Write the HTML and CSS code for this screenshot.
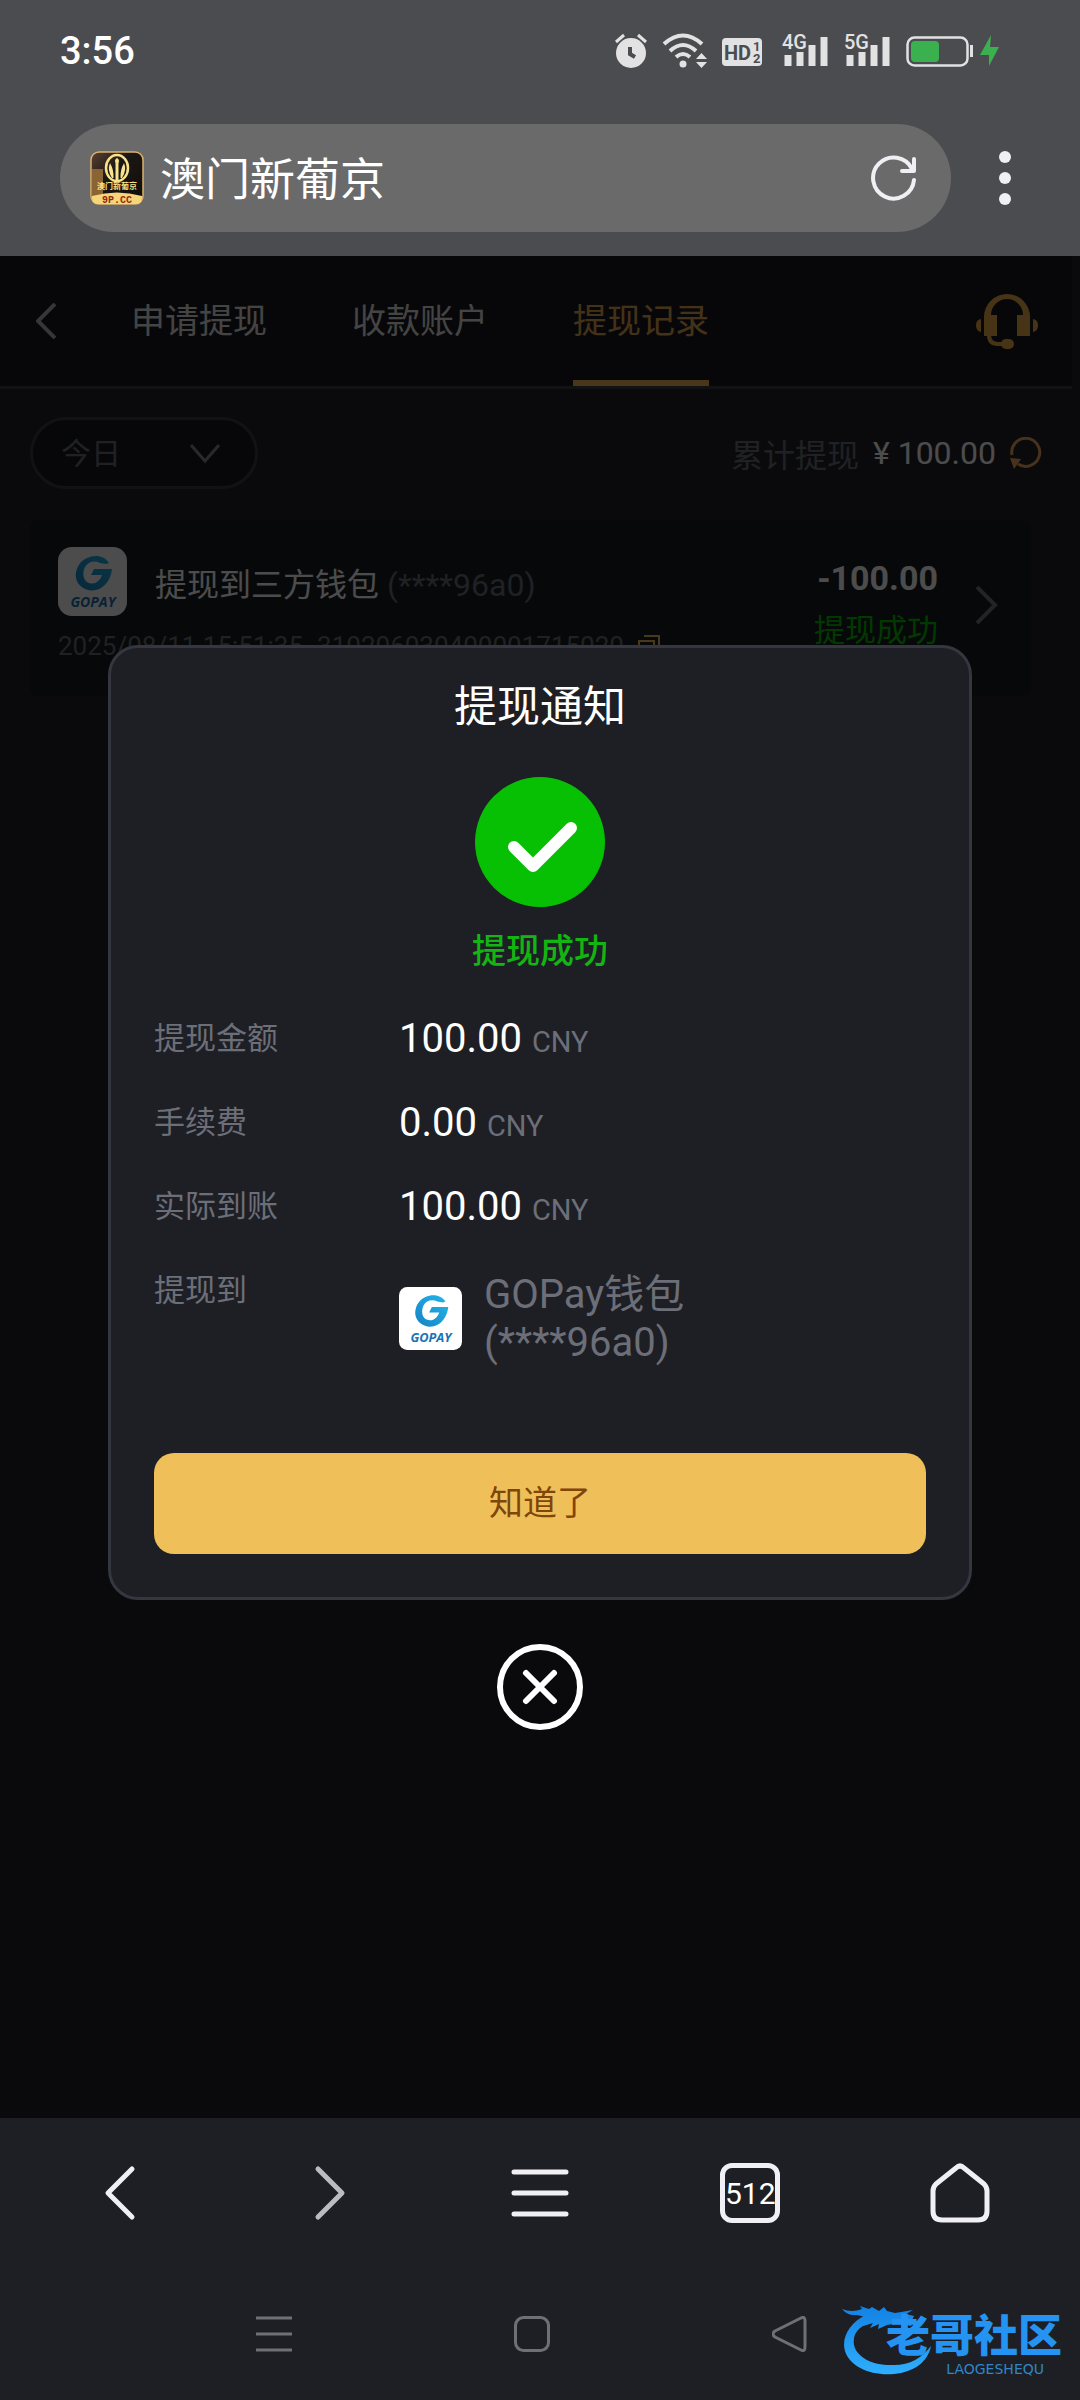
FILE: index.html
```html
<!DOCTYPE html>
<html lang="zh-CN">
<head>
    <meta charset="UTF-8">
    <meta name="viewport" content="width=device-width, initial-scale=1.0">
    <title>提现记录</title>
    <link rel="stylesheet" href="styles.css">
</head>
<body>
    <header class="browser-top">
        <div class="status-bar">
            <span class="clock">3:56</span>
            <div class="status-icons">
                <svg width="32" height="36" viewBox="0 0 32 36">
                    <circle cx="16" cy="20" r="15" fill="#e2e2e3"/>
                    <path d="M1 9L9 2M23 2L31 9" stroke="#e2e2e3" stroke-width="3"/>
                    <path d="M15 14V21L20 24" stroke="#4b4c50" stroke-width="4" fill="none"/>
                </svg>
                <svg width="43" height="36" viewBox="0 0 43 36">
                    <path d="M1 11Q20-6 39 11M7 18Q20 6 33 18M13 24Q20 18 27 24" stroke="#e2e2e3" stroke-width="4" fill="none"/>
                    <circle cx="20" cy="31" r="3.500" fill="#e2e2e3"/>
                    <path d="M33 26L38.500 20L44 26ZM33 29L38.500 35L44 29Z" fill="#e2e2e3"/>
                </svg>
                <svg width="44" height="36" viewBox="0 0 44 36">
                    <rect y="5" width="40" height="28" rx="4" fill="#e2e2e3"/>
                    <text x="2" y="27" class="hd-text">HD</text>
                    <text x="31" y="18" class="hd-small">1</text>
                    <text x="31" y="30" class="hd-small">2</text>
                </svg>
                <svg width="46" height="36" viewBox="0 0 46 36">
                    <path d="M6 22V33M18 19V33M30 12V33M42 4V33" stroke="#e2e2e3" stroke-width="7"/>
                    <text x="0" y="16" class="net-text">4G</text>
                </svg>
                <svg width="46" height="36" viewBox="0 0 46 36">
                    <path d="M6 22V33M18 19V33M30 12V33M42 4V33" stroke="#e2e2e3" stroke-width="7"/>
                    <text x="0" y="16" class="net-text">5G</text>
                </svg>
                <svg width="94" height="36" viewBox="0 0 94 36">
                    <rect x="1.500" y="4.500" width="60" height="28" rx="7" fill="none" stroke="#e2e2e3" stroke-width="2.500"/>
                    <rect x="5" y="8" width="28" height="21" rx="4" fill="#3bb04f"/>
                    <rect x="64" y="12" width="3" height="12" fill="#e2e2e3"/>
                    <path d="M85 2L74 22H83V33L93 14H84Z" fill="#3bb04f"/>
                </svg>
            </div>
        </div>
        <div class="address-row">
            <div class="address-bar">
                <svg width="54" height="54" viewBox="0 0 54 54">
                    <defs>
                        <linearGradient id="night" x1="0" y1="0" x2="1" y2="1">
                            <stop offset="0" stop-color="#5a4234"/>
                            <stop offset="0.4" stop-color="#1b1714"/>
                            <stop offset="1" stop-color="#0e0c0a"/>
                        </linearGradient>
                    </defs>
                    <rect x="1" y="1" width="52" height="52" rx="8" fill="url(#night)" stroke="#d9b26c" stroke-width="1.500"/>
                    <path d="M2 18H13V46H2Z" fill="#8a6434"/>
                    <ellipse cx="27" cy="17" rx="11" ry="13" fill="none" stroke="#f8e38a" stroke-width="2.500"/>
                    <path d="M25.500 29V12Q24 9 27 7Q30 9 28.500 12V29ZM22 27Q17 19 20 12Q24 19 23.500 27ZM32 27Q37 19 34 12Q30 19 30.500 27Z" fill="#f8e38a"/>
                    <text x="27" y="38" class="fav-name">澳门新葡京</text>
                    <path d="M2 45Q27 38 52 45V47Q52 53 46 53H8Q2 53 2 47Z" fill="#f6d478"/>
                    <text x="27" y="52" class="fav-code">9P.CC</text>
                </svg>
                <span class="site-name">澳门新葡京</span>
                <button class="icon-btn" aria-label="刷新">
                    <svg width="48" height="48" viewBox="0 0 48 48">
                        <path d="M44 26A20.500 20.500 0 1 1 42 15" class="line light"/>
                        <path d="M44 5V17H32" class="line light"/>
                    </svg>
                </button>
            </div>
            <button class="icon-btn" aria-label="更多">
                <svg width="12" height="54" viewBox="0 0 12 54" fill="#f0f0f4">
                    <circle cx="6" cy="6" r="6"/>
                    <circle cx="6" cy="27" r="6"/>
                    <circle cx="6" cy="48" r="6"/>
                </svg>
            </button>
        </div>
    </header>

    <main class="page">
        <div class="page-inner">
            <nav class="tabs">
                <button class="icon-btn" aria-label="返回">
                    <svg width="20" height="36" viewBox="0 0 20 36"><path d="M19 1L2 18L19 35" stroke="#b4b4b6" stroke-width="4" fill="none"/></svg>
                </button>
                <div class="tab-list">
                    <a href="#" class="tab">申请提现</a>
                    <a href="#" class="tab">收款账户</a>
                    <a href="#" class="tab active">提现记录</a>
                </div>
                <button class="icon-btn" aria-label="客服">
                    <svg width="62" height="56" viewBox="0 0 62 56" fill="#efb04a">
                        <path d="M8 43V24A23 23 0 0 1 54 24V43H41V22H47A16 16 0 0 0 15 22H21V43Z"/>
                        <path d="M5 26V39Q0 38 0 32Q0 27 5 26ZM57 26V39Q62 38 62 32Q62 27 57 26Z"/>
                        <path d="M13 42Q13 51 22 51H27" fill="none" stroke="#efb04a" stroke-width="4"/>
                        <rect x="25" y="46" width="13" height="10" rx="5"/>
                    </svg>
                </button>
            </nav>

            <div class="toolbar">
                <div class="date-filter">
                    <select aria-label="日期">
                        <option>今日</option>
                    </select>
                    <svg width="30" height="20" viewBox="0 0 30 20"><path d="M1 1L15 17L29 1" stroke="#88898f" stroke-width="3" fill="none"/></svg>
                </div>
                <div class="total">
                    <span class="muted">累计提现</span>
                    <span class="total-sum">¥ 100.00</span>
                    <button class="icon-btn" aria-label="刷新金额">
                        <svg width="32" height="32" viewBox="0 0 32 32">
                            <path d="M2 18A14 14 0 1 1 8 27" fill="none" stroke="#efa85a" stroke-width="3"/>
                            <path d="M0 21L11 22L4 32Z" fill="#efa85a"/>
                        </svg>
                    </button>
                </div>
            </div>

            <a href="#" class="record">
                <div class="record-main">
                    <div class="record-title">
                        <svg class="record-logo" viewBox="0 0 69 69">
                            <defs>
                                <linearGradient id="goBlue" x1="0" y1="1" x2="1" y2="0">
                                    <stop offset="0" stop-color="#1583c4"/>
                                    <stop offset="1" stop-color="#25b6ea"/>
                                </linearGradient>
                            </defs>
                            <rect width="69" height="69" rx="14" fill="#fff"/>
                            <path d="M51 16C47 9 37 7 29 11C20 15 17 24 18 31C20 40 29 45 38 43C47 41 53 32 54 22H36L33 28H44C42 34 37 38 31 36C25 34 24 26 27 20C30 15 36 13 42 16L48 17Z" fill="url(#goBlue)"/>
                            <text x="35" y="60" class="gopay-word">GOPAY</text>
                        </svg>
                        <span>提现到三方钱包 <span class="muted">(****96a0)</span></span>
                    </div>
                    <div class="record-meta">
                        <span>2025/08/11 15:51:35</span>
                        <span>310206030400001715020</span>
                        <svg width="22" height="22" viewBox="0 0 22 22"><path d="M1 6H16V21H1ZM6 1H21V16" fill="none" stroke="#efc05a" stroke-width="2"/></svg>
                    </div>
                </div>
                <div class="record-side">
                    <strong class="amount">-100.00</strong>
                    <span class="success">提现成功</span>
                </div>
                <svg width="22" height="38" viewBox="0 0 22 38"><path d="M1 1L19 19L1 37" stroke="#77787e" stroke-width="4" fill="none"/></svg>
            </a>
        </div>

        <div class="overlay">
            <section class="modal" role="dialog" aria-labelledby="modalTitle">
                <h1 class="modal-title" id="modalTitle">提现通知</h1>
                <svg class="check" width="130" height="130" viewBox="0 0 130 130">
                    <circle cx="65" cy="65" r="65" fill="#07bf03"/>
                    <path d="M39 70L58 89L96 51" stroke="#fff" stroke-width="12" stroke-linecap="round" stroke-linejoin="round" fill="none"/>
                </svg>
                <p class="modal-status">提现成功</p>
                <dl class="details">
                    <dt>提现金额</dt>
                    <dd>100.00 <small>CNY</small></dd>
                    <dt>手续费</dt>
                    <dd>0.00 <small>CNY</small></dd>
                    <dt>实际到账</dt>
                    <dd>100.00 <small>CNY</small></dd>
                    <dt>提现到</dt>
                    <dd class="wallet">
                        <svg class="wallet-logo" viewBox="0 0 69 69">
                            <rect width="69" height="69" rx="9" fill="#fff"/>
                            <path d="M51 16C47 9 37 7 29 11C20 15 17 24 18 31C20 40 29 45 38 43C47 41 53 32 54 22H36L33 28H44C42 34 37 38 31 36C25 34 24 26 27 20C30 15 36 13 42 16L48 17Z" fill="url(#goBlue)"/>
                            <text x="35" y="60" class="gopay-word">GOPAY</text>
                        </svg>
                        <span>GOPay钱包<br>(****96a0)</span>
                    </dd>
                </dl>
                <button class="confirm-btn">知道了</button>
            </section>
            <button class="icon-btn close-btn" aria-label="关闭">
                <svg width="86" height="86" viewBox="0 0 86 86" fill="none" stroke="#fff" stroke-width="6" stroke-linecap="round">
                    <circle cx="43" cy="43" r="40"/>
                    <path d="M29 29L57 57M57 29L29 57"/>
                </svg>
            </button>
        </div>
    </main>

    <footer class="browser-bottom">
        <nav class="browser-nav">
            <button class="icon-btn" aria-label="后退">
                <svg width="60" height="60" viewBox="0 0 60 60"><path d="M42 6L18 30L42 54" class="line light"/></svg>
            </button>
            <button class="icon-btn" aria-label="前进">
                <svg width="60" height="60" viewBox="0 0 60 60"><path d="M18 6L42 30L18 54" class="line dim"/></svg>
            </button>
            <button class="icon-btn" aria-label="菜单">
                <svg width="60" height="60" viewBox="0 0 60 60"><path d="M4 9H56M4 30H56M4 51H56" class="line light"/></svg>
            </button>
            <button class="tab-count" aria-label="标签页">512</button>
            <button class="icon-btn" aria-label="主页">
                <svg width="60" height="60" viewBox="0 0 60 60"><path d="M26 5Q30 1 34 5L54 21Q57 24 57 28V48Q57 57 48 57H12Q3 57 3 48V28Q3 24 6 21Z" class="line light"/></svg>
            </button>
        </nav>
        <nav class="system-nav">
            <button class="icon-btn" aria-label="最近任务">
                <svg width="36" height="36" viewBox="0 0 36 36"><path d="M0 2H36M0 18H36M0 34H36" class="thin"/></svg>
            </button>
            <button class="icon-btn" aria-label="桌面">
                <svg width="36" height="36" viewBox="0 0 36 36"><rect x="1.500" y="1.500" width="33" height="33" rx="8" class="thin"/></svg>
            </button>
            <button class="icon-btn" aria-label="返回上一级">
                <svg width="36" height="36" viewBox="0 0 36 36"><path d="M3 15L29 2Q33 0 33 5V31Q33 36 29 34L3 21Q-1 18 3 15Z" class="thin"/></svg>
            </button>
        </nav>
        <div class="watermark">
            <svg width="92" height="78" viewBox="0 0 92 78">
                <defs>
                    <linearGradient id="dragonBlue" gradientUnits="userSpaceOnUse" x1="0" y1="6" x2="0" y2="78">
                        <stop offset="0" stop-color="#1280e4"/>
                        <stop offset="1" stop-color="#2fb0ff"/>
                    </linearGradient>
                </defs>
                <g fill="url(#dragonBlue)">
                    <path d="M24 17C8 24-1 40 3 53C8 69 29 78 52 76C72 74 86 64 89 48C80 60 68 67 52 67C32 68 15 60 12 47C10 34 19 26 34 24Z"/>
                    <path d="M0 11Q10 15 20 11L18 8L27 11L30 9L37 13L42 9L45 13L53 15L71 12L64 16L72 18L70 22L60 22L70 25L69 28L57 25L45 27L36 31L37 26L28 30L31 25L21 28L26 21Q20 17 12 17Q5 17 0 11Z"/>
                </g>
            </svg>
            <div class="watermark-text">
                <b>老哥社区</b>
                <small>LAOGESHEQU</small>
            </div>
        </div>
    </footer>
</body>
</html>
```
FILE: styles.css
```css
* {
    box-sizing: border-box;
}
body {
    margin: 0;
    min-height: 100vh;
    display: flex;
    flex-direction: column;
    background: #22232a;
    color: #fff;
    font-family: Roboto, 'Noto Sans CJK SC', sans-serif;
}
svg {
    display: block;
    flex-shrink: 0;
}
a {
    color: inherit;
    text-decoration: none;
}
button {
    font-family: inherit;
    cursor: pointer;
}
.icon-btn {
    display: flex;
    padding: 0;
    border: none;
    background: none;
}
.line {
    fill: none;
    stroke-width: 5;
    stroke-linecap: round;
    stroke-linejoin: round;
}
.address-bar .line {
    stroke-width: 4;
}
.light {
    stroke: #f0f0f4;
}
.dim {
    stroke: #bcbcc0;
}
.thin {
    fill: none;
    stroke: #6f7073;
    stroke-width: 3;
}
.muted {
    color: #6c6e7a;
}
.success {
    color: #07bf03;
}

/* browser header */
.browser-top {
    background: #4b4c50;
    padding: 30px 60px 24px;
}
.status-bar {
    display: flex;
    justify-content: space-between;
    align-items: center;
    height: 42px;
    padding-right: 20px;
}
.clock {
    font-size: 38px;
    font-weight: 500;
}
.status-icons {
    display: flex;
    gap: 16px;
}
.status-icons svg {
    overflow: visible;
}
.hd-text {
    font-size: 20px;
    font-weight: 700;
    fill: #4b4c50;
}
.hd-small {
    font-size: 13px;
    font-weight: 700;
    fill: #4b4c50;
}
.net-text {
    font-size: 20px;
    font-weight: 500;
    fill: #e2e2e3;
    stroke: #4b4c50;
    stroke-width: 3px;
    paint-order: stroke;
}
.address-row {
    display: flex;
    align-items: center;
    margin-top: 52px;
    gap: 48px;
    padding-right: 9px;
}
.address-bar {
    flex: 1;
    display: flex;
    align-items: center;
    gap: 16px;
    height: 108px;
    padding: 0 33px 0 30px;
    border-radius: 54px;
    background: #6a6a6a;
}
.site-name {
    flex: 1;
    padding-top: 6px;
    font-size: 45px;
    line-height: 60px;
}
.fav-name {
    font-size: 8px;
    font-weight: 700;
    fill: #f8e38a;
    text-anchor: middle;
}
.fav-code {
    font-family: 'Liberation Mono', monospace;
    font-size: 10px;
    font-weight: 700;
    fill: #8f2a10;
    text-anchor: middle;
}

/* page */
.page {
    flex: 1;
    position: relative;
}
.page-inner {
    margin-right: 8px;
}
.tabs {
    display: flex;
    align-items: center;
    height: 133px;
    padding: 0 34px 0 36px;
    background: #181a20;
    border-bottom: 3px solid #3a3c43;
}
.tab-list {
    flex: 1;
    display: flex;
    align-self: stretch;
    gap: 85px;
    margin-left: 75px;
}
.tab {
    display: flex;
    align-items: center;
    font-size: 34px;
    color: #e3e3e3;
    border-bottom: 6px solid transparent;
}
.tab.active {
    color: #e4a953;
    border-bottom-color: #f0b850;
}
.toolbar {
    display: flex;
    justify-content: space-between;
    align-items: center;
    padding: 28px 30px 31px;
    font-size: 32px;
}
.date-filter {
    position: relative;
    width: 228px;
}
.date-filter select {
    width: 100%;
    height: 72px;
    padding: 0 28px;
    border: 3px solid #3a3c43;
    border-radius: 36px;
    background: #181a20;
    color: #6c6e7a;
    font: inherit;
    font-size: 30px;
    appearance: none;
}
.date-filter svg {
    position: absolute;
    right: 38px;
    top: 27px;
    pointer-events: none;
}
.total {
    display: flex;
    align-items: center;
    gap: 14px;
}
.record {
    display: flex;
    align-items: center;
    margin: 0 41px 0 30px;
    padding: 27px 33px 34px 28px;
    border-radius: 8px;
    background: #1a1c21;
}
.record-main {
    flex: 1;
}
.record-title {
    display: flex;
    align-items: center;
    gap: 28px;
    font-size: 32px;
}
.record-logo {
    width: 69px;
    height: 69px;
}
.gopay-word {
    font-family: 'Open Sans', sans-serif;
    font-size: 14px;
    font-weight: 700;
    font-style: italic;
    fill: #1a73b5;
    text-anchor: middle;
}
.record-meta {
    display: flex;
    align-items: center;
    gap: 14px;
    margin-top: 14px;
    font-size: 26px;
    line-height: 32px;
    color: #6c6e7a;
}
.record-side {
    display: flex;
    flex-direction: column;
    align-items: flex-end;
    gap: 13px;
    margin-right: 38px;
    font-size: 31px;
    line-height: 40px;
}
.amount {
    font-size: 34px;
}

/* modal */
.overlay {
    position: absolute;
    inset: 0;
    display: flex;
    flex-direction: column;
    justify-content: center;
    align-items: center;
    background: rgba(0, 0, 0, 0.7);
}
.modal {
    width: 80%;
    display: flex;
    flex-direction: column;
    align-items: center;
    padding: 29px 43px 43px;
    border: 3px solid #343640;
    border-radius: 30px;
    background: #1e1f25;
}
.modal-title {
    margin: 0;
    font-size: 43px;
    font-weight: 400;
    line-height: 60px;
}
.check {
    margin-top: 40px;
}
.modal-status {
    margin: 21px 0 0;
    font-size: 34px;
    font-weight: 500;
    line-height: 46px;
    color: #12b512;
}
.details {
    align-self: stretch;
    display: grid;
    grid-template-columns: 245px 1fr;
    row-gap: 36px;
    margin: 41px 0 0;
    line-height: 48px;
    color: #6c6e78;
}
.details dt {
    font-size: 31px;
}
.details dd {
    margin: 0;
    font-size: 40px;
    color: #fff;
}
.details small {
    font-size: 29px;
    line-height: 1;
    color: #6c6e78;
}
.details .wallet {
    display: flex;
    align-items: center;
    gap: 22px;
    padding-top: 4px;
    color: #6c6e78;
}
.wallet-logo {
    width: 63px;
    height: 63px;
}
.confirm-btn {
    align-self: stretch;
    margin-top: 86px;
    height: 101px;
    padding: 0 0 6px;
    border: none;
    border-radius: 20px;
    background: #efc05a;
    color: #7f4509;
    font-size: 34px;
}
.close-btn {
    margin-top: 44px;
}

/* browser footer */
.browser-bottom {
    position: relative;
    background: #1e1f24;
    padding-bottom: 48px;
}
.browser-nav {
    display: grid;
    grid-template-columns: repeat(5, 1fr);
    justify-items: center;
    padding: 45px 15px;
}
.tab-count {
    width: 60px;
    height: 60px;
    padding: 0;
    border: 5px solid #f0f0f4;
    border-radius: 12px;
    background: none;
    color: #fff;
    font-size: 30px;
}
.system-nav {
    display: grid;
    grid-template-columns: repeat(3, 1fr);
    justify-items: center;
    padding: 48px 161px 0 145px;
}
.watermark {
    position: absolute;
    right: 18px;
    bottom: 24px;
    display: flex;
}
.watermark-text {
    display: flex;
    flex-direction: column;
    align-items: flex-end;
    margin-left: -48px;
    padding-top: 14px;
}
.watermark b {
    font-size: 44px;
    font-weight: 900;
    line-height: 50px;
    color: #2593f2;
}
.watermark small {
    padding-right: 18px;
    font-family: 'DejaVu Sans', sans-serif;
    font-size: 14px;
    line-height: 14px;
    color: #2f86c8;
}
```
